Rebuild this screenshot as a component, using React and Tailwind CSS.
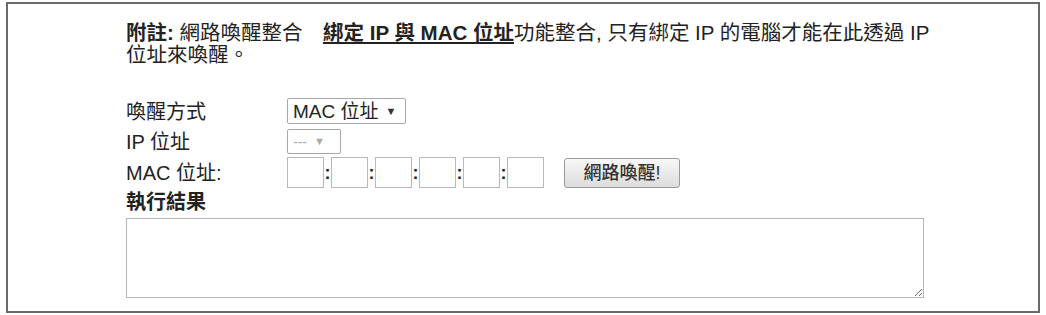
const font = { fontFamily: '"Liberation Sans", "Noto Sans CJK TC", sans-serif' };

const FakeSelect = ({ label, muted, className }) => (
  <div
    className={`flex items-center gap-[7px] border border-[#a8a8a8] rounded-[2px] bg-white px-[5px] ${
      muted ? "text-[#aaa] text-[14px]" : "text-[#222] text-[19px]"
    } ${className}`}
  >
    <span className="leading-none">{label}</span>
    <span className={`text-[11px] ${muted ? "text-[#aaa]" : "text-[#333]"}`}>▼</span>
  </div>
);

const App = () => {
  const macParts = [0, 1, 2, 3, 4, 5];

  return (
    <div className="w-[1046px] h-[315px] bg-white pt-[2px] pl-[6px]" style={font}>
      <div className="w-[1034px] h-[311px] border-2 border-[#6a6a6a] bg-white pl-[118px] pt-[18px] text-[#222] text-[20px]">
        <p className="leading-[22px] whitespace-nowrap text-[20.5px]">
          <span className="font-bold">附註:</span> 網路喚醒整合{"\u3000"}
          <span className="font-bold underline underline-offset-2">綁定 IP 與 MAC 位址</span>
          功能整合, 只有綁定 IP 的電腦才能在此透過 IP
          <br />
          位址來喚醒。
        </p>

        <div className="mt-[31px] flex flex-col">
          <div className="flex h-[30px] items-start">
            <div className="w-[161px] self-center leading-[24px]">喚醒方式</div>
            <FakeSelect label="MAC 位址" className="h-[26px] w-[119px] mt-[1px]" />
          </div>
          <div className="flex h-[29px] items-center">
            <div className="w-[161px] leading-[24px]">IP 位址</div>
            <FakeSelect label="---" muted className="h-[25px] w-[54px]" />
          </div>
          <div className="flex h-[33px] items-center">
            <div className="w-[161px] leading-[24px]">MAC 位址:</div>
            <div className="flex items-center">
              {macParts.map((i) => (
                <div key={i} className="flex items-center">
                  <input
                    type="text"
                    className="w-[37px] h-[31px] border border-[#b8b8b8] bg-white outline-none"
                  />
                  {i < 5 && (
                    <span className="w-[7px] text-center font-bold text-[18px] leading-none text-[#222]">:</span>
                  )}
                </div>
              ))}
              <button className="ml-[20px] w-[116px] h-[30px] rounded-[3px] border border-[#9a9a9a] bg-gradient-to-b from-[#f8f8f8] to-[#dcdcdc] text-[18px] font-medium text-[#333] leading-none">
                網路喚醒!
              </button>
            </div>
          </div>
          <div className="mt-[1px] font-bold leading-[24px]">執行結果</div>
          <textarea className="mt-[4px] w-[798px] h-[80px] border border-[#b5b5b5] outline-none" />
        </div>
      </div>
    </div>
  );
};

export default App;
